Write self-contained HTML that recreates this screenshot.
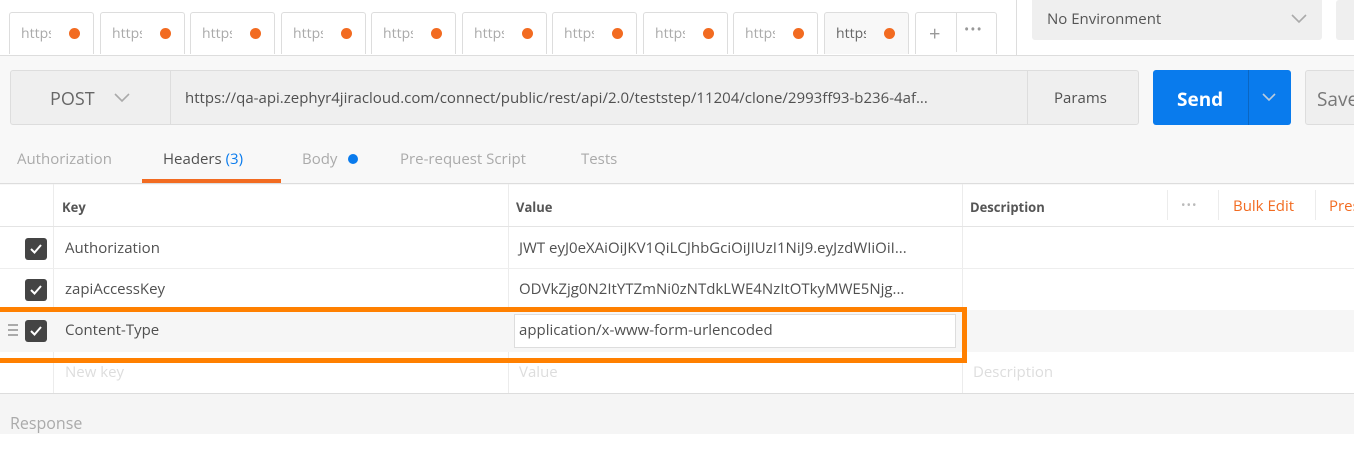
<!DOCTYPE html>
<html><head><meta charset="utf-8"><style>
*{box-sizing:border-box;margin:0;padding:0}
body{width:1354px;height:454px;overflow:hidden;background:#fff;font-family:"Open Sans","DejaVu Sans","Liberation Sans",sans-serif;position:relative;color:#505050}
.a{position:absolute}
.tab{position:absolute;top:12px;height:42px;width:85px;border:1px solid #ddd;border-bottom:none;border-radius:3px 3px 0 0;background:#fff;font-size:14px;color:#aaa;line-height:42px}
.tab b{position:absolute;left:11px;top:0;width:30px;overflow:hidden;white-space:nowrap;font-weight:normal}
.tab i{position:absolute;left:59px;top:15px;width:11px;height:11px;border-radius:50%;background:#f26b21}
.cb{position:absolute;left:25px;width:22px;height:22px;background:#444;border-radius:3px}
.cb svg{position:absolute;left:4px;top:5px}
.t{position:absolute;font-size:15px;color:#505050;white-space:nowrap}
.vl{position:absolute;width:1px;background:#ececec}
.hl{position:absolute;left:0;width:1354px;height:1px;background:#e4e4e4}
</style></head><body>
<div class="a" style="left:0;top:55px;width:1354px;height:130px;background:#f8f8f8;border-top:1px solid #ddd"></div>
<div class="tab" style="left:9px"><b>https</b><i></i></div>
<div class="tab" style="left:100px"><b>https</b><i></i></div>
<div class="tab" style="left:190px"><b>https</b><i></i></div>
<div class="tab" style="left:281px"><b>https</b><i></i></div>
<div class="tab" style="left:371px"><b>https</b><i></i></div>
<div class="tab" style="left:462px"><b>https</b><i></i></div>
<div class="tab" style="left:552px"><b>https</b><i></i></div>
<div class="tab" style="left:643px"><b>https</b><i></i></div>
<div class="tab" style="left:733px"><b>https</b><i></i></div>
<div class="tab" style="left:824px;background:#f8f8f8;color:#666"><b>https</b><i></i></div>
<div class="a" style="left:915px;top:12px;width:82px;height:42px;border:1px solid #ddd;border-bottom:none;border-radius:3px 3px 0 0;background:#fff"></div>
<div class="a" style="left:956px;top:12px;width:1px;height:40px;background:#ddd"></div>
<div class="a" style="left:929px;top:20px;font-size:20px;color:#999">+</div>
<div class="a" style="left:964px;top:20px;font-size:14px;color:#999;letter-spacing:1px">•••</div>
<div class="a" style="left:1016px;top:0;width:1px;height:55px;background:#ddd"></div>
<div class="a" style="left:1032px;top:0;width:290px;height:40px;background:#efefef;border-radius:0 0 3px 3px"></div>
<div class="t" style="left:1047px;top:9px;font-size:15px;color:#555">No Environment</div>
<svg class="a" style="left:1290px;top:13px" width="18" height="12"><path d="M2 2l7 7 7-7" fill="none" stroke="#aaa" stroke-width="1.6"/></svg>
<div class="a" style="left:1336px;top:0;width:30px;height:40px;background:#efefef;border-radius:3px"></div>
<div class="a" style="left:10px;top:70px;width:1129px;height:55px;background:#efefef;border:1px solid #ddd;border-radius:3px"></div>
<div class="a" style="left:170px;top:71px;width:1px;height:53px;background:#ddd"></div>
<div class="a" style="left:1027px;top:71px;width:1px;height:53px;background:#ddd"></div>
<div class="t" style="left:50px;top:87px;font-size:18px;color:#666">POST</div>
<svg class="a" style="left:113px;top:92px" width="18" height="12"><path d="M2 2l7 7 7-7" fill="none" stroke="#aaa" stroke-width="1.6"/></svg>
<div class="t" style="left:185px;top:88px;font-size:15px;color:#505050">https://qa-api.zephyr4jiracloud.com/connect/public/rest/api/2.0/teststep/11204/clone/2993ff93-b236-4af...</div>
<div class="t" style="left:1054px;top:88px;font-size:15px">Params</div>
<div class="a" style="left:1153px;top:70px;width:138px;height:55px;background:#097bed;border-radius:3px"></div>
<div class="a" style="left:1248px;top:70px;width:1px;height:55px;background:#0a66c2"></div>
<div class="t" style="left:1177px;top:86px;font-size:19px;color:#fff;font-weight:bold">Send</div>
<svg class="a" style="left:1260px;top:92px" width="18" height="12"><path d="M3 2l6 6 6-6" fill="none" stroke="#bcd" stroke-width="1.6"/></svg>
<div class="a" style="left:1305px;top:70px;width:60px;height:55px;background:#efefef;border:1px solid #ddd;border-radius:3px"></div>
<div class="t" style="left:1317px;top:86px;font-size:19px;color:#777">Save</div>
<div class="t" style="left:17px;top:149px;color:#aaa">Authorization</div>
<div class="t" style="left:163px;top:149px;color:#505050">Headers <span style="color:#097bed">(3)</span></div>
<div class="a" style="left:142px;top:179px;width:139px;height:4px;background:#f26b21"></div>
<div class="t" style="left:302px;top:149px;color:#aaa">Body</div>
<div class="a" style="left:348px;top:154px;width:10px;height:10px;border-radius:50%;background:#097bed"></div>
<div class="t" style="left:400px;top:149px;color:#aaa">Pre-request Script</div>
<div class="t" style="left:581px;top:149px;color:#aaa">Tests</div>
<div class="hl" style="top:183px;background:#ddd"></div>
<div class="vl" style="left:53px;top:184px;height:210px"></div>
<div class="vl" style="left:508px;top:184px;height:210px"></div>
<div class="vl" style="left:962px;top:184px;height:210px"></div>
<div class="vl" style="left:1167px;top:190px;height:30px"></div>
<div class="vl" style="left:1218px;top:190px;height:30px"></div>
<div class="vl" style="left:1315px;top:190px;height:30px"></div>
<div class="t" style="left:62px;top:198px;font-size:13px;font-weight:bold;color:#555">Key</div>
<div class="t" style="left:516px;top:198px;font-size:13px;font-weight:bold;color:#555">Value</div>
<div class="t" style="left:970px;top:198px;font-size:13px;font-weight:bold;color:#555">Description</div>
<div class="t" style="left:1181px;top:196px;font-size:12px;color:#bbb;letter-spacing:1px">•••</div>
<div class="t" style="left:1233px;top:196px;color:#f26b21">Bulk Edit</div>
<div class="t" style="left:1329px;top:196px;color:#f26b21">Presets</div>
<div class="hl" style="top:226px"></div>
<div class="cb" style="top:238px"><svg width="14" height="12"><path d="M2 6l3.5 3.5L12 2" fill="none" stroke="#fff" stroke-width="2"/></svg></div>
<div class="t" style="left:65px;top:238px">Authorization</div>
<div class="t" style="left:519px;top:238px">JWT eyJ0eXAiOiJKV1QiLCJhbGciOiJIUzI1NiJ9.eyJzdWIiOiI...</div>
<div class="hl" style="top:268px;background:#eee"></div>
<div class="cb" style="top:279px"><svg width="14" height="12"><path d="M2 6l3.5 3.5L12 2" fill="none" stroke="#fff" stroke-width="2"/></svg></div>
<div class="t" style="left:65px;top:279px">zapiAccessKey</div>
<div class="t" style="left:519px;top:279px">ODVkZjg0N2ItYTZmNi0zNTdkLWE4NzItOTkyMWE5Njg...</div>
<div class="a" style="left:0;top:310px;width:1354px;height:42px;background:#f6f6f6"></div>
<div class="a" style="left:514px;top:314px;width:442px;height:34px;background:#fff;border:1px solid #ddd"></div>
<div class="cb" style="top:320px"><svg width="14" height="12"><path d="M2 6l3.5 3.5L12 2" fill="none" stroke="#fff" stroke-width="2"/></svg></div>
<div class="a" style="left:8px;top:324px;width:10px;height:2px;background:#aaa;box-shadow:0 5px 0 #aaa,0 10px 0 #aaa"></div>
<div class="t" style="left:65px;top:320px">Content-Type</div>
<div class="t" style="left:519px;top:320px">application/x-www-form-urlencoded</div>
<div class="a" style="left:-10px;top:307px;width:977px;height:56px;border:5px solid #ff8000"></div>
<div class="t" style="left:65px;top:362px;color:#ddd">New key</div>
<div class="t" style="left:519px;top:362px;color:#ddd">Value</div>
<div class="t" style="left:973px;top:362px;color:#ddd">Description</div>
<div class="a" style="left:0;top:393px;width:1354px;height:41px;background:#f5f5f5;border-top:1px solid #ddd"></div>
<div class="t" style="left:10px;top:412px;color:#aaa;font-size:16px">Response</div>
</body></html>
